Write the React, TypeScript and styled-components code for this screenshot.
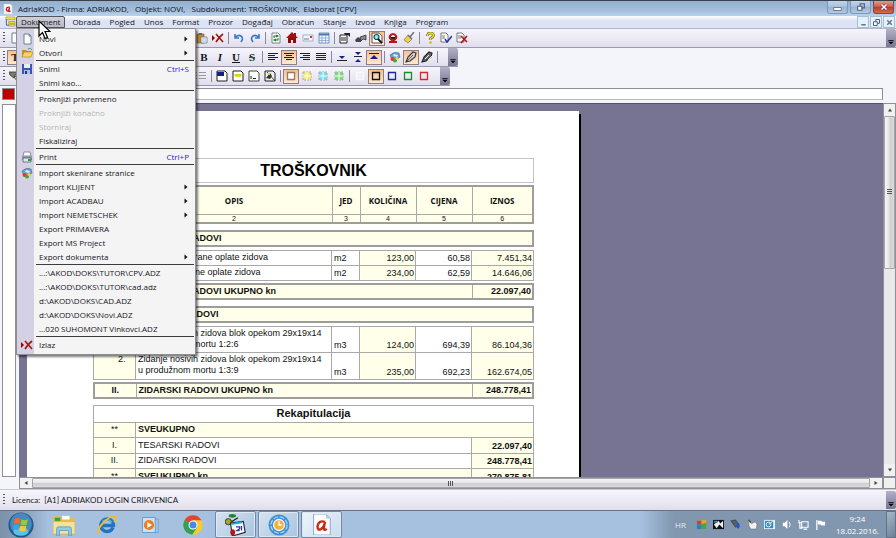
import React from 'react';
import styled, { createGlobalStyle, css } from 'styled-components';

const ui = `"Open Sans", "Noto Sans", sans-serif`;
const arial = `"Liberation Sans", Arial, sans-serif`;

const Global = createGlobalStyle`
  * { box-sizing: border-box; }
  html, body { margin: 0; padding: 0; }
  body { font-family: ${ui}; font-size: 8px; color: #15151c; background: #f4f4fb; overflow: hidden; }
  button { font: inherit; color: inherit; border: 0; padding: 0; margin: 0; background: none; }
  ul { list-style: none; margin: 0; padding: 0; }
  svg { display: block; flex: none; }
`;

const Window = styled.div`
  display: flex;
  flex-direction: column;
  height: 100vh;
`;

/* ---------- title bar ---------- */
const TitleBar = styled.header`
  display: flex;
  align-items: center;
  height: 16px;
  flex: none;
  padding: 0 2px 0 3px;
  gap: 5px;
  border-top: 1px solid #3a4048;
  background: linear-gradient(#94b0cf, #a3bddb 60%, #b9d2ec);
`;
const Title = styled.h1`
  flex: 1;
  margin: 0;
  font-size: 8px;
  line-height: 14px;
  font-weight: 400;
  white-space: pre;
  color: #0c1420;
`;
const Captions = styled.div`
  display: flex;
  gap: 2px;
  align-self: flex-start;
`;
const Caption = styled.button<{ $close?: boolean }>`
  display: flex;
  align-items: center;
  justify-content: center;
  width: 21px;
  height: 13px;
  border: 1px solid ${p => (p.$close ? '#7d4a4c' : '#7f99b5')};
  border-top: 0;
  border-radius: 0 0 3px 3px;
  background: ${p =>
    p.$close
      ? 'linear-gradient(#dc9c90, #cb6250 45%, #bd3a25 50%, #d2694c)'
      : 'linear-gradient(#c0d4e9, #a9c3df 45%, #96b3d2 50%, #b0cae5)'};
`;

/* ---------- menu bar ---------- */
const MenuBar = styled.nav`
  display: flex;
  align-items: stretch;
  height: 13px;
  flex: none;
  padding: 0 1px 0 5px;
  background: linear-gradient(#fdfdff, #dde3f3 40%, #dce3f4);
  border-bottom: 1px solid #b3b5cb;
`;
const MenuList = styled.ul`
  display: flex;
  flex: 1;
`;
const MenuHolder = styled.li`
  position: relative;
  display: flex;
`;
const MenuTitle = styled.button<{ $open?: boolean }>`
  padding: 0 4px 0 3px;
  line-height: 10px;
  border: 1px solid transparent;
  ${p =>
    p.$open &&
    css`
      padding: 0 4px;
      margin-right: 3px;
      border-color: #55555f;
      border-radius: 2px 2px 0 0;
      background: linear-gradient(#d0d0d8, #b8b8c4);
    `}
`;
const ChildCaption = styled.button`
  display: flex;
  align-items: center;
  justify-content: center;
  width: 12px;
  margin-left: 1px;
  border: 1px solid #a7bfd2;
  background: #e4f0fa;
`;

const Popup = styled.div`
  position: absolute;
  z-index: 5;
  top: 100%;
  left: 0;
  width: 180px;
  padding: 3px 1px 2px;
  border: 1px solid #8d8d92;
  background: linear-gradient(90deg, #d3d1e3 17px, #f4f4f4 17px);
  box-shadow: 2px 2px 2px rgba(0, 0, 0, 0.5);
`;
const Command = styled.button`
  display: grid;
  grid-template-columns: 17px 1fr auto;
  align-items: center;
  column-gap: 4px;
  width: 100%;
  height: 14px;
  padding-right: 5px;
  text-align: left;
  line-height: 14px;
  &:disabled { color: #b4b4b4; }
`;
const IconSlot = styled.span`
  display: flex;
  justify-content: center;
`;
const Shortcut = styled.span`
  color: #2a20e8;
`;
const Rule = styled.li`
  height: 2px;
  margin: 0 0 0 18px;
  border-top: 1px solid #3c3c40;
`;

const Pointer = styled.svg`
  position: absolute;
  z-index: 9;
  left: 22px;
  top: 4px;
`;

/* ---------- toolbars ---------- */
const Bar = styled.div<{ $wide?: boolean }>`
  display: flex;
  align-items: center;
  align-self: ${p => (p.$wide ? 'stretch' : 'flex-start')};
  height: 19px;
  flex: none;
  border-bottom: 1px solid #9a97b2;
  background: linear-gradient(#f6f5fd, #ecebf5 50%, #dfdeea);
`;
const Lead = styled.div<{ $width: number }>`
  display: flex;
  align-items: center;
  width: ${p => p.$width}px;
`;
const Grip = styled.span`
  width: 2px;
  height: 12px;
  margin: 0 2px 0 3px;
  background: repeating-linear-gradient(#55546a 0 1px, transparent 1px 3px);
`;
const Tool = styled.button<{ $on?: boolean }>`
  display: flex;
  align-items: center;
  justify-content: center;
  width: 16px;
  height: 15px;
  border: 1px solid ${p => (p.$on ? '#8c7f86' : 'transparent')};
  background: ${p => (p.$on ? 'linear-gradient(#f9c08c, #fde9d2)' : 'none')};
`;
const Divider = styled.span`
  width: 1px;
  height: 12px;
  margin: 0 2px;
  background: #8886a0;
`;
const Fill = styled.span`
  flex: 1;
`;
const EndCap = styled.button`
  display: flex;
  align-items: flex-end;
  justify-content: center;
  width: 10px;
  height: 18px;
  margin-left: 8px;
  padding-bottom: 2px;
  border-radius: 0 2px 2px 0;
  background: linear-gradient(#b3b1c8, #77758f);
`;
const Letter = styled.span<{ $kind: string }>`
  font: bold 11px/12px "Liberation Serif", "Times New Roman", serif;
  font-style: ${p => (p.$kind === 'I' ? 'italic' : 'normal')};
  text-decoration: ${p => (p.$kind === 'U' ? 'underline' : p.$kind === 'S' ? 'line-through #b02020' : 'none')};
`;

/* ---------- rulers and workspace ---------- */
const RulerRow = styled.div`
  display: flex;
  height: 17px;
  flex: none;
  padding: 2px 13px 3px 2px;
  gap: 2px;
`;
const Swatch = styled.span`
  width: 13px;
  border: 1px solid #8a8a90;
  background: #c00000;
`;
const Ruler = styled.div`
  flex: 1;
  border: 1px solid #8f8f96;
  border-bottom-color: #b8b8be;
  background: #fff;
`;
const Workspace = styled.main`
  display: grid;
  grid-template-columns: 19px 1fr 13px;
  grid-template-rows: 1fr 12px;
  flex: 1;
  min-height: 0;
`;
const SideRuler = styled.div`
  margin: 1px 3px 0 2px;
  border: 1px solid #8f8f96;
  background: #fff;
`;
const Canvas = styled.div`
  overflow: hidden;
  border-top: 1px solid #55535f;
  background: #777392;
`;
const Scroll = styled.div<{ $vertical?: boolean }>`
  display: flex;
  flex-direction: ${p => (p.$vertical ? 'column' : 'row')};
  border: 1px solid #8f8f96;
  background: #e9e9ea;
`;
const Arrow = styled.button`
  display: flex;
  align-items: center;
  justify-content: center;
  flex: 0 0 12px;
  background: #f1f1f1;
`;
const Thumb = styled.div<{ $vertical?: boolean }>`
  display: flex;
  align-items: center;
  justify-content: center;
  flex: ${p => (p.$vertical ? '0 0 41%' : '1')};
  border: 1px solid #a5a5a8;
  border-radius: 1px;
  background: linear-gradient(${p => (p.$vertical ? '90deg, ' : '')}#f6f6f6, #e6e6e7 45%, #cfcfd1 55%, #dadadb);
`;
const Corner = styled.div`
  border: 1px solid #8f8f96;
  background: #f0f0f0;
`;

/* ---------- document ---------- */
const Paper = styled.article`
  width: 552px;
  margin: 7px 0 0 8px;
  padding: 47px 45px 40px 66px;
  background: #fff;
  box-shadow: 2px 3px 0 #000;
  font-family: ${arial};
  font-size: 9px;
  line-height: 11px;
  color: #111;
`;
const PaperTitle = styled.h2`
  height: 25px;
  margin: 0 0 2px;
  border: 1px solid #c4c4c4;
  font-size: 16px;
  line-height: 24px;
  text-align: center;
  color: #000;
`;
const Sheet = styled.table<{ $height: number; $gap: number; $frame?: boolean }>`
  width: 100%;
  height: ${p => p.$height}px;
  margin-bottom: ${p => p.$gap}px;
  table-layout: fixed;
  border-collapse: collapse;
  border: ${p => (p.$frame ? '2px solid #9d9d9d' : '1px solid #b5b5b5')};
`;
const Cell = styled.td<{ $tint?: boolean; $bold?: boolean; $align?: string; $pos?: string }>`
  padding: 1px 2px;
  border: 1px solid #a9a9a9;
  vertical-align: ${p => p.$pos || 'middle'};
  text-align: ${p => p.$align || 'left'};
  font-weight: ${p => (p.$bold ? 700 : 400)};
  background: ${p => (p.$tint ? '#ffffea' : '#fff')};
`;
const Amount = styled(Cell)`
  padding: 1px;
  text-align: right;
  vertical-align: bottom;
`;
const HeadCell = styled.th`
  height: 28px;
  padding: 0;
  border: 1px solid #a9a9a9;
  background: #ffffea;
  font-family: ${ui};
  font-size: 8px;
  font-weight: 700;
`;
const NumberCell = styled.td`
  height: 8px;
  padding: 0;
  border: 1px solid #a9a9a9;
  background: #ffffea;
  font-size: 7px;
  line-height: 7px;
  text-align: center;
`;
const RecapHead = styled.th`
  height: 17px;
  padding: 0;
  border: 1px solid #a9a9a9;
  font-size: 11px;
  background: #fff;
`;

/* ---------- status bar and taskbar ---------- */
const Status = styled.footer`
  display: flex;
  align-items: center;
  height: 21px;
  flex: none;
  border-top: 1px solid #c9c8d6;
  background: linear-gradient(#f6f5fd, #ecebf5 50%, #dfdeea);
  font: 8px/10px Lato, ${arial};
  white-space: pre;
`;
const StatusText = styled.p`
  margin: 0 0 0 5px;
`;
const Taskbar = styled.footer`
  display: flex;
  align-items: stretch;
  height: 28px;
  flex: none;
  border-top: 1px solid #62748a;
  background: linear-gradient(90deg, #7c92ab, #8ba3bf 28px, #a6c1df 48px, #a6c1df 640px, #8197af 674px, #8197af);
`;
const Task = styled.button<{ $run?: boolean; $active?: boolean }>`
  display: flex;
  align-items: center;
  justify-content: center;
  width: 41px;
  margin-right: 2px;
  border: 1px solid transparent;
  ${p =>
    p.$run &&
    css`
      border-color: #6f89a5;
      border-radius: 2px;
      box-shadow: inset 0 0 0 1px #dde9f5;
      background: ${p.$active ? 'linear-gradient(135deg, #eef4fa, #c9dcee)' : 'linear-gradient(135deg, #d5e3f1, #a9c3df)'};
    `}
`;
const Tray = styled.div`
  display: flex;
  align-items: center;
  margin-left: auto;
  color: #fff;
`;
const Language = styled.span`
  width: 18px;
  color: #e3eaf2;
`;
const TrayIcon = styled.button`
  display: flex;
  justify-content: center;
  width: 17px;
`;
const Clock = styled.time`
  display: grid;
  width: 57px;
  line-height: 12px;
  text-align: center;
`;
const ShowDesktop = styled.button`
  align-self: stretch;
  width: 10px;
  border: 1px solid #5f7389;
  background: linear-gradient(135deg, #a9b8c8, #6b8096);
`;

/* ---------- icons ---------- */
const pic: Record<string, React.ReactNode> = {
  page: <path d="M3 1h5l2 2v8H3z M8 1v2h2" fill="#fff" stroke="#6d7f94" />,
  open: (<><path d="M1 3h4l1 1h4v6H1z" fill="#c98f20" /><path d="M3 5h9l-2 5H1z" fill="#fbd565" stroke="#b07c1c" strokeWidth=".6" /><path d="M7 2q3-2 4 1" fill="none" stroke="#789" /></>),
  save: (<><path d="M1 1h10v10H1z" fill="#3b55b5" /><path d="M3 1h6v4H3z" fill="#e9eefb" /><path d="M3 7h6v4H3z" fill="#aebce6" /><path d="M4 8h2v3H4z" fill="#24357d" /></>),
  print: (<><path d="M3 1h6l1 4H2z" fill="#fff" stroke="#6f7d8d" strokeWidth=".8" /><path d="M1 5h10v4H1z" fill="#8b99a8" /><path d="M2 7h8v4H2z" fill="#dfe5ea" stroke="#56626f" strokeWidth=".8" /><path d="M7 8h3v2H7z" fill="#2e9b3c" /></>),
  scan: (<><path d="M1 4q4-4 9-2l1 4-4 3H3z" fill="#6aa0d0" stroke="#36668f" strokeWidth=".6" /><circle cx="3.5" cy="8" r="2" fill="#e33" /><circle cx="6" cy="9.5" r="2" fill="#3a3" /><circle cx="8" cy="7.5" r="1.5" fill="#fc3" /><path d="M5 3l4 1-1 2-4-1z" fill="#d8ebfa" /></>),
  cross: (<><path d="M0 3l3 3-3 3z" fill="#900" /><path d="M4 2l7 8M11 2Q7 5 4 10" fill="none" stroke="#a31515" strokeWidth="1.6" /></>),
  paste: (<><path d="M1 2h7v9H1z" fill="#c48a32" stroke="#7a531a" strokeWidth=".6" /><path d="M3 1h3v2H3z" fill="#666" /><path d="M5 5h6v6H5z" fill="#fff" stroke="#567" strokeWidth=".7" /><path d="M6 7h4M6 9h4" stroke="#69c" strokeWidth=".7" /></>),
  undo: <path d="M2 2v4h4M2 6q3-4 6-2 3 2 0 6" fill="none" stroke="#3b77cf" strokeWidth="1.6" />,
  redo: <path d="M10 2v4H6M10 6Q7 2 4 4q-3 2 0 6" fill="none" stroke="#3b77cf" strokeWidth="1.6" />,
  refresh: (<><path d="M2 1h6l2 2v8H2z" fill="#fff" stroke="#667" strokeWidth=".8" /><path d="M4 6V4h3M6 3l2 1-2 1M8 6v2H5M6 7L4 8l2 1" fill="none" stroke="#128a2c" strokeWidth="1.1" /></>),
  home: (<><path d="M6 0l6 6H0zM8 1h2v3H8z" fill="#a31010" /><path d="M2 6h8v5H7V8H5v3H2z" fill="#8c0d0d" /></>),
  mail: (<><path d="M1 3h10v6H1z" fill="#f4f8fd" stroke="#8fa3bd" strokeWidth=".8" /><path d="M8 4h2v2H8z" fill="#c33" /><path d="M2 7h5" stroke="#57a" /></>),
  grid: (<><path d="M1 1h10v10H1z" fill="#eef5fd" stroke="#7795b9" /><path d="M1 2.5h10" stroke="#4a79b8" strokeWidth="2" /><path d="M4 3v8M7.5 3v8M1 6h10M1 8.5h10" stroke="#86a7cf" strokeWidth=".8" /></>),
  props: (<><path d="M1 3h7v8H1z" fill="#fff" stroke="#222" /><path d="M2 6h5M2 8h5" stroke="#222" /><path d="M5 1h6v4L9 3H6z" fill="#223" /></>),
  print2: (<><path d="M0 8l3-3 3 2v3H1z" fill="#445" /><path d="M5 5l6-2v5L8 7 6 9z" fill="#889" stroke="#222" strokeWidth=".7" /></>),
  search: (<><path d="M1 1h7l3 3v7H1z" fill="#fff" stroke="#333" strokeWidth=".8" /><circle cx="5.5" cy="5" r="2.5" fill="#9fe0ea" stroke="#155" strokeWidth="1.2" /><path d="M7 7l4 4" stroke="#111" strokeWidth="1.8" /></>),
  omega: (<><path d="M2 10h3V8Q2 6 3 4q1-2 3-2t3 2q1 2-2 4v2h3" fill="none" stroke="#c01313" strokeWidth="2.2" /><path d="M4 5h4v2H4z" fill="#222" /></>),
  broom: (<><path d="M11 0L7 5" stroke="#876" strokeWidth="1.6" /><path d="M5 3l4 4-4 4-4-3z" fill="#f1cf4b" stroke="#8a7430" strokeWidth=".7" /><path d="M5 3l4 4" stroke="#47a" strokeWidth="1.5" /></>),
  help: (<><path d="M3.5 4q0-3 3-3t3 2.500Q9 5 6.500 6.500V8" fill="none" stroke="#5d5d10" strokeWidth="2.6" /><path d="M3.500 4q0-3 3-3t3 2.500Q9 5 6.500 6.500V8" fill="none" stroke="#f2e01c" strokeWidth="1.4" /><circle cx="6.5" cy="10.5" r="1.2" fill="#cdb90c" /></>),
  check: (<><path d="M1 1h5l2 2v7H1z" fill="#fff" stroke="#556" strokeWidth=".8" /><path d="M2 4h3M2 6h3" stroke="#778" /><path d="M5 7l2 3 5-6" fill="none" stroke="#2237a8" strokeWidth="1.5" /></>),
  docx: (<><path d="M1 1h5l2 2v7H1z" fill="#fff" stroke="#556" strokeWidth=".8" /><path d="M2 4h3M2 6h3" stroke="#778" /><path d="M5 4l6 6M11 4l-6 7" stroke="#b01818" strokeWidth="1.6" /></>),
  left: <path d="M1 2.500h10M1 4.500h7M1 6.500h10M1 8.500h7" stroke="#222" />,
  center: <path d="M1 2.500h10M3 4.500h6M1 6.500h10M3 8.500h6" stroke="#222" />,
  right: <path d="M1 2.500h10M4 4.500h7M1 6.500h10M4 8.500h7" stroke="#222" />,
  justify: <path d="M1 2.500h10M1 4.500h10M1 6.500h10M1 8.500h10" stroke="#222" />,
  bottom: (<><path d="M3 5h6L6 8z" fill="#16208c" /><path d="M1 9.500h10" stroke="#222" /></>),
  middle: (<><path d="M3 1h6L6 4zM3 11h6L6 8z" fill="#16208c" /><path d="M2 5.500h8" stroke="#222" /></>),
  top: (<><path d="M2 8h8L6 4z" fill="#16208c" /><path d="M1 2.500h10" stroke="#222" /></>),
  pen: (<><path d="M1 11l2-5 5-5 3 1-1 4-5 4z" fill="#d6d2cc" stroke="#333" strokeWidth="1.1" /><path d="M2 10l6-6" stroke="#555" /></>),
  pen2: (<><path d="M1 11l2-5 5-5 3 1-1 4-5 4z" fill="#666" stroke="#222" strokeWidth="1.1" /><path d="M4 8l4-4M7 9l4-4" stroke="#eee" /></>),
  hand: (<><path d="M0 2h9l3 3H6L5 8 1 5z" fill="#777d66" stroke="#333" strokeWidth=".8" /><path d="M5 7l3 4 3-1-2-4z" fill="#ddc" stroke="#333" strokeWidth=".8" /></>),
  list: <path d="M1 2.500h1M4 2.500h7M1 5.500h1M4 5.500h7M1 8.500h1M4 8.500h7" stroke="#999" />,
  docA: (<><path d="M1 1h8l2 2v8H1z" fill="#fff" stroke="#222" /><path d="M1 2h7v4H1z" fill="#16208c" /></>),
  docB: (<><path d="M1 1h8l2 2v8H1z" fill="#fff" stroke="#222" /><path d="M3 4h6v3H3z" fill="#f2e51e" /><path d="M2 5h8" stroke="#aa2" strokeWidth=".6" /></>),
  docC: (<><path d="M1 1h8l2 2v8H1z" fill="#fff" stroke="#444" /><path d="M3 6v3M5 8.500h3" stroke="#222" /></>),
  docD: (<><path d="M1 1h8l2 2v8H1z" fill="#eee" stroke="#222" /><path d="M2 8l4-5 2 3-2 3z" fill="#333" /><path d="M3 2l8 9" stroke="#444" /><path d="M4 3h2v2H4z" fill="#dc3" /></>),
  arrow: <path d="M3 1l6 5-6 5z" fill="#111" />,
  app: (<><path d="M1 0h8l2 2v10H1z" fill="#fff" stroke="#b9b9c0" strokeWidth=".6" /><path d="M8 4q-4-1-4 3 1 3 3 0l1-3-1 4q0 2 2 0" fill="none" stroke="#c81616" strokeWidth="1.6" /></>),
  view: (<><path d="M1 1h10v3H1zM4 6h7v2H4zM4 9h7v2H4z" fill="#efe53a" stroke="#8d8420" strokeWidth=".6" /><path d="M1.500 4v6H4" fill="none" stroke="#556" /></>),
  min: <path d="M1 6h10v4H1z" fill="#fff" stroke="#4b5d72" />,
  restore: (<><path d="M5 2h5v5H5z" fill="none" stroke="#4b5d72" strokeWidth="1.3" /><path d="M2 5h5v5H2z" fill="#fff" stroke="#4b5d72" strokeWidth="1.3" /></>),
  close: (<><path d="M3 3l6 6M9 3l-6 6" stroke="#6d3030" strokeWidth="3.4" /><path d="M3 3l6 6M9 3l-6 6" stroke="#fff" strokeWidth="2" /></>),
  closeSmall: <path d="M3 3l6 6M9 3l-6 6" stroke="#5f788c" strokeWidth="2" />,
  minSmall: <path d="M3 9h6" stroke="#5f788c" strokeWidth="2" />,
  cap: <path d="M2 5h8v1H2zM2 7h8l-4 4z" fill="#000" />,
  start: (<><circle cx="6" cy="6" r="5.8" fill="#24578c" /><circle cx="6" cy="5.5" r="5" fill="#4589bd" /><ellipse cx="6" cy="9" rx="3.5" ry="2" fill="#58c3e6" /><path d="M3 3.200q1.500-.8 2.800 0L5.300 5.600q-1.300-.7-2.700 0z" fill="#f06a2c" /><path d="M6.200 3.400q1.300.7 3 0L8.600 5.900q-1.400.6-2.800-.1z" fill="#96c93c" /><path d="M2.500 6q1.300-.7 2.700 0l-.5 2.400q-1.300-.7-2.700 0z" fill="#3ba3e0" /><path d="M5.700 6.200q1.300.7 2.800.1L8 8.800q-1.500.5-2.800-.1z" fill="#fbc92f" /></>),
  explorer: (<><path d="M0 1h4l1 1h7v8H0z" fill="#e5bd55" /><path d="M1 2h3v2H1z" fill="#35a04a" /><path d="M5 1h4v2H5z" fill="#fff" /><path d="M0 4h12v7H0z" fill="#f8e29a" stroke="#d1a740" strokeWidth=".4" /><path d="M2 12V8q0-1 1-1h6q1 0 1 1v4H8.500V9h-5v3z" fill="#8ecbee" stroke="#4994c4" strokeWidth=".4" /></>),
  ie: (<><path d="M9.600 7.600A3.800 3.800 0 1 1 9.900 6.300H3" fill="none" stroke="#1f74c4" strokeWidth="2" /><path d="M3.200 4A3.800 3.800 0 0 1 9 4.400" fill="none" stroke="#56aef0" strokeWidth="1" /><path d="M1 11Q-.5 9 4 4.500 9-.5 11.300.8q1 1-1 3.500" fill="none" stroke="#f2bc28" strokeWidth="1.1" /></>),
  media: (<><path d="M4 2h7.500v9H4z" fill="#9dc7e8" stroke="#6d9ec4" strokeWidth=".5" /><path d="M1 1h8.500v10H1z" fill="#cbe2f3" stroke="#5c9bc8" strokeWidth=".6" /><circle cx="5.3" cy="6" r="3.4" fill="#f07c1c" /><path d="M4.200 4l3.200 2-3.200 2z" fill="#fff" /></>),
  chrome: (<><circle cx="6" cy="6" r="5.8" fill="#f7cb2d" /><path d="M6 6L.9 3.100A5.800 5.800 0 0 1 11.100 3.200H6z" fill="#dd4636" /><path d="M6 6L.9 3.100A5.800 5.800 0 0 0 5.500 11.800L8.500 7.500z" fill="#2fa352" /><circle cx="6" cy="6" r="2.7" fill="#fff" /><circle cx="6" cy="6" r="2.1" fill="#4688ee" /></>),
  cards: (<><ellipse cx="4" cy="1" rx="2" ry="1" fill="#23832c" /><path d="M1 3l3 1 3-2" fill="none" stroke="#222" strokeWidth=".7" /><circle cx="1.8" cy="4.2" r="1.7" fill="#a8a32b" stroke="#333" strokeWidth=".5" /><path d="M3 5l7-1 1 6-7 2z" fill="#fff" stroke="#222" strokeWidth=".6" /><path d="M3.500 5.500l6-1" stroke="#1bb4cf" /><path d="M6 7h2v1L6.500 9H8M9 6.500v2.500" fill="none" stroke="#223a9b" strokeWidth=".7" /><ellipse cx="4.2" cy="10" rx="1.3" ry="1.7" fill="#b9141c" /></>),
  gauge: (<><circle cx="6" cy="6" r="5.7" fill="#3d91d2" /><circle cx="6" cy="6" r="4.4" fill="none" stroke="#a5d5f2" strokeWidth=".7" strokeDasharray="2.6 .9" /><circle cx="6" cy="6" r="3" fill="#f5b03e" stroke="#eef6fc" strokeWidth=".7" /><path d="M6 4v2h1.500" fill="none" stroke="#fff" strokeWidth=".7" /></>),
  bigA: (<><path d="M1.500 0h7L11 2.500V12H1.500z" fill="#fff" stroke="#7d9cc4" strokeWidth=".5" /><path d="M8.500 0v2.500H11" fill="#b9cde6" /><path d="M8 4.500Q4.500 3.300 3.700 7q0 2.600 2 1.600Q7.500 7.500 8 4.500L7.300 8q0 1.800 1.700.5" fill="none" stroke="#cc2a17" strokeWidth="1.4" /></>),
  t1: (<><path d="M1 2h5v4H1z" fill="#d3412a" /><path d="M6 1h5v4H6z" fill="#e9a324" /><path d="M1 6h5v5H1z" fill="#2b7fc6" /><path d="M6 6l5-2v7H6z" fill="#4ea43a" /></>),
  t2: (<><path d="M0 1h12v10H0z" fill="#111" /><path d="M1 6l5-4 2 3 3-3v8L7 6l-3 4z" fill="#eee" /><path d="M1 2h4v2H1z" fill="#48a" /></>),
  t3: (<><path d="M1 2l5-1 4 5-4 3z" fill="#56606c" stroke="#222" strokeWidth=".6" /><path d="M6 8l3-3 2 3-2 3z" fill="#2653d4" /></>),
  t4: (<><path d="M2 1l3 4 4-2 2 3-1 5H4L2 7z" fill="#f1f1ee" stroke="#777" strokeWidth=".7" /><path d="M2 1l2 3" stroke="#444" strokeWidth="1.3" /></>),
  t5: (<><path d="M0 1h12v10H0z" fill="#e3f3fb" /><path d="M1 2h9v8H1z" fill="#288bd0" /><circle cx="5" cy="6" r="2.6" fill="none" stroke="#fff" strokeWidth="1" /><path d="M5 6l5-4" stroke="#f0d36a" strokeWidth="1.2" /></>),
  t6: (<><path d="M2 4h2l3-3v10L4 8H2z" fill="#fff" /><path d="M9 3q2 3 0 6" fill="none" stroke="#fff" /></>),
  t7: <path d="M4 3h7v6H4zM6 11h4M1 1v3h2M2 4v6h3" fill="none" stroke="#fff" strokeWidth="1.2" />,
  t8: (<><path d="M2 1v11" stroke="#fff" strokeWidth="1.3" /><path d="M3 2h4l1 1h3v4H7L6 6H3z" fill="#fff" /></>),
};
const square = (stroke: string, fill = 'none') => <path d="M2.500 2.500h7v7h-7z" fill={fill} stroke={stroke} strokeWidth="1.3" />;
const dotted = (color: string) => (
  <><path d="M2 2h8v8H2z" fill={color} stroke="#aaa" strokeDasharray="2 1" /><path d="M6 2v8M2 6h8" stroke="#fff" /></>
);
Object.assign(pic, {
  sqWhite: square('#9a7a60', '#fff'), sqNone: square('#f8f8fb', '#f1f1f6'), sqBlack: square('#111'),
  sqBlue: square('#1c2a8c'), sqGreen: square('#15902d'), sqRed: square('#d82a2a'),
  dYellow: dotted('#f4ec6a'), dCyan: dotted('#74dfee'), dGreen: dotted('#7fdc7a'),
});

const Icon = ({ name, size = 12 }: { name: string; size?: number }) => (
  <svg width={size} height={size} viewBox="0 0 12 12" aria-hidden="true">{pic[name]}</svg>
);

/* ---------- data ---------- */
type Entry = { text: string; icon?: string; keys?: string; sub?: boolean; off?: boolean } | null;
const commands: Entry[] = [
  { text: 'Novi', icon: 'page', sub: true },
  { text: 'Otvori', icon: 'open', sub: true },
  null,
  { text: 'Snimi', icon: 'save', keys: 'Ctrl+S' },
  { text: 'Snimi kao...' },
  null,
  { text: 'Proknjiži privremeno' },
  { text: 'Proknjiži konačno', off: true },
  { text: 'Storniraj', off: true },
  { text: 'Fiskaliziraj' },
  null,
  { text: 'Print', icon: 'print', keys: 'Ctrl+P' },
  null,
  { text: 'Import skenirane stranice', icon: 'scan' },
  { text: 'Import KLIJENT', sub: true },
  { text: 'Import ACADBAU', sub: true },
  { text: 'Import NEMETSCHEK', sub: true },
  { text: 'Export PRIMAVERA' },
  { text: 'Export MS Project' },
  { text: 'Export dokumenta', sub: true },
  null,
  { text: '...:\\AKOD\\DOKS\\TUTOR\\CPV.ADZ' },
  { text: '...:\\AKOD\\DOKS\\TUTOR\\cad.adz' },
  { text: 'd:\\AKOD\\DOKS\\CAD.ADZ' },
  { text: 'd:\\AKOD\\DOKS\\Novi.ADZ' },
  { text: '...020 SUHOMONT Vinkovci.ADZ' },
  null,
  { text: 'Izlaz', icon: 'cross' },
];
const menus = ['Obrada', 'Pogled', 'Unos', 'Format', 'Prozor', 'Događaj', 'Obračun', 'Stanje', 'Izvod', 'Knjiga', 'Program'];

const standard = 'paste cross | undo redo | refresh home mail grid | props print2 search* omega broom | help check docx';
const format = 'B I U S | left center* right justify | bottom middle top* | scan pen* pen2 |';
const borders = 'list | docA docB docC docD | sqWhite* dYellow dCyan dGreen | sqNone sqBlack* sqBlue sqGreen sqRed';

const Tools = ({ spec }: { spec: string }) => (
  <>
    {spec.split(' ').map((token, i) => {
      if (token === '|') return <Divider key={i} />;
      const name = token.replace('*', '');
      return (
        <Tool key={i} $on={token.endsWith('*')} aria-label={name}>
          {'BIUS'.includes(name) ? <Letter $kind={name}>{name}</Letter> : <Icon name={name} />}
        </Tool>
      );
    })}
  </>
);

const Columns = () => (
  <colgroup>
    <col width="42" />
    <col width="196" />
    <col width="28" />
    <col width="56" />
    <col width="56" />
    <col />
  </colgroup>
);

const Section = ({ no, name }: { no: string; name: string }) => (
  <Sheet $height={17} $gap={3} $frame>
    <Columns />
    <tbody><tr>
      <Cell $tint $bold $align="center">{no}</Cell>
      <Cell $tint $bold colSpan={5}>{name}</Cell>
    </tr></tbody>
  </Sheet>
);
const Total = ({ no, name, sum }: { no: string; name: string; sum: string }) => (
  <Sheet $height={17} $gap={6} $frame>
    <Columns />
    <tbody><tr>
      <Cell $tint $bold $align="center">{no}</Cell>
      <Cell $tint $bold colSpan={4}>{name}</Cell>
      <Amount $tint $bold>{sum}</Amount>
    </tr></tbody>
  </Sheet>
);
type Line = { text: string[]; unit: string; qty: string; price: string; sum: string };
const Lines = ({ rows, height }: { rows: Line[]; height: number }) => (
  <Sheet $height={height} $gap={2}>
    <Columns />
    <tbody>
      {rows.map((r, i) => (
        <tr key={i}>
          <Cell $tint $align="right" $pos="top">{i + 1}.&nbsp;&nbsp;&nbsp;</Cell>
          <Cell $pos="top">{r.text.map((t, k) => <React.Fragment key={k}>{k > 0 && <br />}{t}</React.Fragment>)}</Cell>
          <Cell $pos="bottom">{r.unit}</Cell>
          <Amount $tint>{r.qty}</Amount>
          <Amount>{r.price}</Amount>
          <Amount $tint>{r.sum}</Amount>
        </tr>
      ))}
    </tbody>
  </Sheet>
);

const Document = () => (
  <Paper>
    <PaperTitle>TROŠKOVNIK</PaperTitle>
    <Sheet $height={38} $gap={6} $frame>
      <Columns />
      <thead><tr>{['R.B.', 'OPIS', 'JED', 'KOLIČINA', 'CIJENA', 'IZNOS'].map(h => <HeadCell key={h}>{h}</HeadCell>)}</tr></thead>
      <tbody><tr>{[1, 2, 3, 4, 5, 6].map(n => <NumberCell key={n}>{n}</NumberCell>)}</tr></tbody>
    </Sheet>
    <Section no="I." name="TESARSKI RADOVI" />
    <Lines height={31} rows={[
      { text: ['Izrada jednostrane oplate zidova'], unit: 'm2', qty: '123,00', price: '60,58', sum: '7.451,34' },
      { text: ['Izrada dvostrane oplate zidova'], unit: 'm2', qty: '234,00', price: '62,59', sum: '14.646,06' },
    ]} />
    <Total no="I." name="TESARSKI RADOVI UKUPNO kn" sum="22.097,40" />
    <Section no="II." name="ZIDARSKI RADOVI" />
    <Lines height={54} rows={[
      { text: ['Zidanje nosivih zidova blok opekom 29x19x14', 'u produžnom mortu 1:2:6'], unit: 'm3', qty: '124,00', price: '694,39', sum: '86.104,36' },
      { text: ['Zidanje nosivih zidova blok opekom 29x19x14', 'u produžnom mortu 1:3:9'], unit: 'm3', qty: '235,00', price: '692,23', sum: '162.674,05' },
    ]} />
    <Total no="II." name="ZIDARSKI RADOVI UKUPNO kn" sum="248.778,41" />
    <Sheet $height={80} $gap={0}>
      <Columns />
      <thead><tr><RecapHead colSpan={6}>Rekapitulacija</RecapHead></tr></thead>
      <tbody>
        <tr><Cell $tint $align="center">**</Cell><Cell $tint $bold colSpan={5}>SVEUKUPNO</Cell></tr>
        <tr><Cell $tint $align="center">I.</Cell><Cell colSpan={4}>TESARSKI RADOVI</Cell><Amount $tint $bold>22.097,40</Amount></tr>
        <tr><Cell $tint $align="center">II.</Cell><Cell colSpan={4}>ZIDARSKI RADOVI</Cell><Amount $tint $bold>248.778,41</Amount></tr>
        <tr><Cell $tint $align="center">**</Cell><Cell $tint $bold colSpan={4}>SVEUKUPNO kn</Cell><Amount $tint $bold>270.875,81</Amount></tr>
      </tbody>
    </Sheet>
  </Paper>
);

const Tri = ({ turn }: { turn: number }) => (
  <svg width="6" height="6" viewBox="0 0 6 6" aria-hidden="true"><path d="M1 4.500h4l-2-3z" fill="#444" transform={`rotate(${turn} 3 3)`} /></svg>
);

export default function App() {
  return (
    <Window>
      <Global />
      <TitleBar>
        <Icon name="app" size={10} />
        <Title>{'AdriaKOD - Firma: ADRIAKOD,   Objekt: NOVI,   Subdokument: TROŠKOVNIK,  Elaborat [CPV]'}</Title>
        <Captions>
          <Caption aria-label="Minimize"><Icon name="min" size={9} /></Caption>
          <Caption aria-label="Restore"><Icon name="restore" size={10} /></Caption>
          <Caption $close aria-label="Close"><Icon name="close" size={10} /></Caption>
        </Captions>
      </TitleBar>

      <MenuBar>
        <Icon name="view" size={11} />
        <MenuList>
          <MenuHolder>
            <MenuTitle $open aria-expanded="true">Dokument</MenuTitle>
            <Popup>
              <ul>
                {commands.map((c, i) =>
                  c === null ? <Rule key={i} /> : (
                    <li key={i}>
                      <Command disabled={c.off}>
                        <IconSlot>{c.icon && <Icon name={c.icon} />}</IconSlot>
                        <span>{c.text}</span>
                        {c.keys && <Shortcut>{c.keys}</Shortcut>}
                        {c.sub && <Icon name="arrow" size={6} />}
                      </Command>
                    </li>
                  )
                )}
              </ul>
            </Popup>
            <Pointer width="13" height="20" viewBox="0 0 13 20" aria-hidden="true">
              <path d="M1 1v15l3.500-3.500L7 18.500l2.500-1L7 11.500h5z" fill="#fff" stroke="#000" strokeWidth="1.2" />
            </Pointer>
          </MenuHolder>
          {menus.map(m => <MenuHolder key={m}><MenuTitle>{m}</MenuTitle></MenuHolder>)}
        </MenuList>
        <ChildCaption aria-label="Minimize document"><Icon name="minSmall" size={9} /></ChildCaption>
        <ChildCaption aria-label="Restore document"><Icon name="restore" size={9} /></ChildCaption>
        <ChildCaption aria-label="Close document"><Icon name="closeSmall" size={9} /></ChildCaption>
      </MenuBar>

      <Bar $wide>
        <Lead $width={194}><Grip /><Tool aria-label="New"><Icon name="page" /></Tool></Lead>
        <Tools spec={standard} />
        <Fill />
        <EndCap aria-label="More"><Icon name="cap" size={8} /></EndCap>
      </Bar>
      <Bar>
        <Lead $width={196}><Grip /><Tool $on aria-label="Text"><Letter $kind="T">T</Letter></Tool></Lead>
        <Tools spec={format} />
        <EndCap aria-label="More"><Icon name="cap" size={8} /></EndCap>
      </Bar>
      <Bar>
        <Lead $width={193}><Grip /><Tool aria-label="Pick"><Icon name="hand" /></Tool></Lead>
        <Tools spec={borders} />
        <EndCap aria-label="More"><Icon name="cap" size={8} /></EndCap>
      </Bar>

      <RulerRow><Swatch /><Ruler /></RulerRow>

      <Workspace>
        <SideRuler />
        <Canvas><Document /></Canvas>
        <Scroll $vertical>
          <Arrow aria-label="Scroll up"><Tri turn={0} /></Arrow>
          <Thumb $vertical><svg width="5" height="6"><path d="M0 .5h5M0 2.500h5M0 4.500h5" stroke="#555" /></svg></Thumb>
          <Fill />
          <Arrow aria-label="Scroll down"><Tri turn={180} /></Arrow>
        </Scroll>
        <span />
        <Scroll>
          <Arrow aria-label="Scroll left"><Tri turn={270} /></Arrow>
          <Thumb><svg width="6" height="5"><path d="M.5 0v5M2.500 0v5M4.500 0v5" stroke="#555" /></svg></Thumb>
          <Arrow aria-label="Scroll right"><Tri turn={90} /></Arrow>
        </Scroll>
        <Corner />
      </Workspace>

      <Status>
        <Grip />
        <StatusText>{'Licenca:  [A1] ADRIAKOD LOGIN CRIKVENICA'}</StatusText>
        <Fill />
        <EndCap aria-label="More"><Icon name="cap" size={8} /></EndCap>
      </Status>

      <Taskbar>
        <Task aria-label="Start"><Icon name="start" size={26} /></Task>
        <Task aria-label="Explorer"><Icon name="explorer" size={22} /></Task>
        <Task aria-label="Internet Explorer"><Icon name="ie" size={20} /></Task>
        <Task aria-label="Media Player"><Icon name="media" size={18} /></Task>
        <Task aria-label="Chrome"><Icon name="chrome" size={20} /></Task>
        <Task $run aria-label="Cards"><Icon name="cards" size={22} /></Task>
        <Task $run aria-label="Gauge"><Icon name="gauge" size={22} /></Task>
        <Task $run $active aria-label="AdriaKOD"><Icon name="bigA" size={21} /></Task>
        <Tray>
          <Language>HR</Language>
          {['t1', 't2', 't3', 't4', 't5', 't6', 't7', 't8'].map(t => (
            <TrayIcon key={t} aria-label={t}><Icon name={t} size={11} /></TrayIcon>
          ))}
          <Clock><span>9:24</span><span>18.02.2016.</span></Clock>
          <ShowDesktop aria-label="Show desktop" />
        </Tray>
      </Taskbar>
    </Window>
  );
}
